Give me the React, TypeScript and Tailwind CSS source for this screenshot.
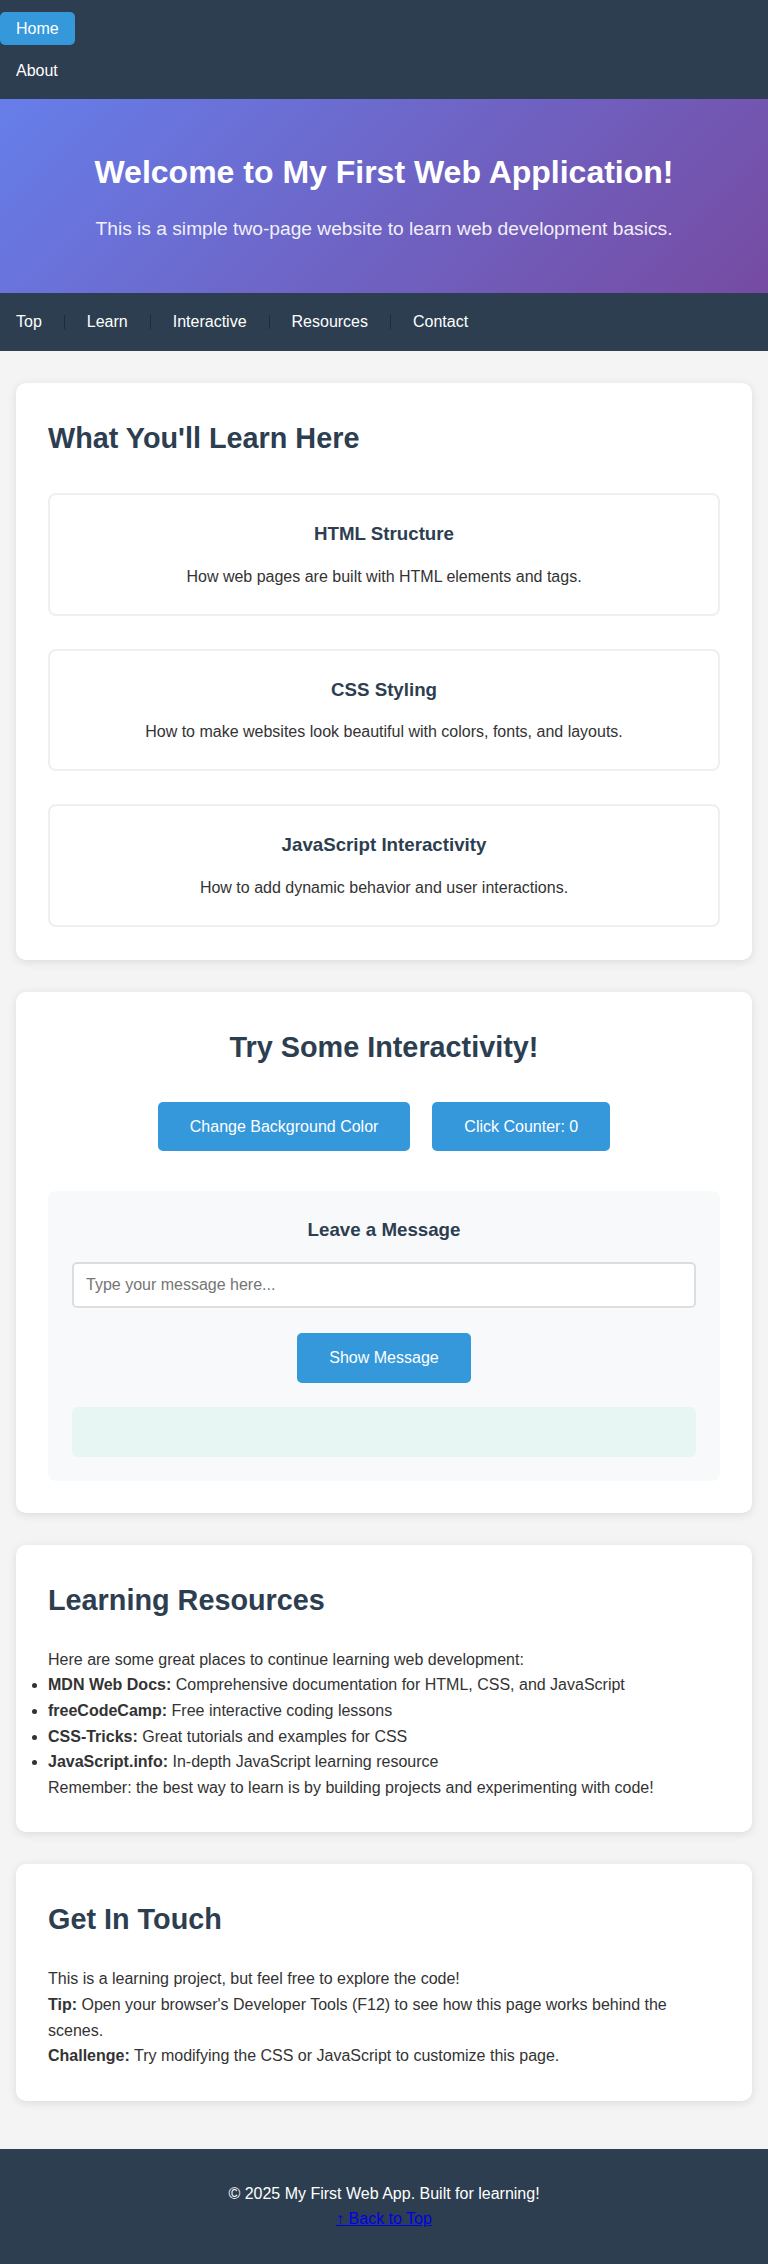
import React, { useState } from 'react';

const sections = ['Top', 'Learn', 'Interactive', 'Resources', 'Contact'];

const features = [
  { title: 'HTML Structure', text: 'How web pages are built with HTML elements and tags.' },
  { title: 'CSS Styling', text: 'How to make websites look beautiful with colors, fonts, and layouts.' },
  { title: 'JavaScript Interactivity', text: 'How to add dynamic behavior and user interactions.' },
];

const resources = [
  { name: 'MDN Web Docs:', text: 'Comprehensive documentation for HTML, CSS, and JavaScript' },
  { name: 'freeCodeCamp:', text: 'Free interactive coding lessons' },
  { name: 'CSS-Tricks:', text: 'Great tutorials and examples for CSS' },
  { name: 'JavaScript.info:', text: 'In-depth JavaScript learning resource' },
];

function Card(props: { children: React.ReactNode; className?: string }) {
  return (
    <section
      className={`rounded-[10px] bg-white px-8 pt-8 shadow-[0_2px_10px_rgba(0,0,0,0.1)] ${props.className ?? ''}`}
    >
      {props.children}
    </section>
  );
}

function Heading(props: { children: React.ReactNode; className?: string }) {
  return (
    <h2 className={`text-[28.8px] font-bold leading-[1.6] text-[#2c3e50] ${props.className ?? ''}`}>
      {props.children}
    </h2>
  );
}

export default function App() {
  const [count, setCount] = useState(0);
  const [message, setMessage] = useState('');
  const [shown, setShown] = useState('');

  return (
    <div className="min-h-screen bg-[#f4f4f4] font-['Liberation_Sans',Arial,sans-serif] text-base leading-[1.6] text-[#333]">
      <nav className="bg-[#2c3e50] py-3">
        <ul className="flex flex-col items-start gap-[9px]">
          <li>
            <a href="#" className="flex h-[33px] items-center rounded-[5px] bg-[#3498db] px-4 text-white">
              Home
            </a>
          </li>
          <li>
            <a href="#" className="flex h-[33px] items-center px-4 text-white">
              About
            </a>
          </li>
        </ul>
      </nav>

      <header className="bg-[linear-gradient(135deg,#667eea_0%,#764ba2_100%)] py-12 text-center text-white">
        <h1 className="mb-4 text-[32px] font-bold leading-[1.6]">Welcome to My First Web Application!</h1>
        <p className="text-[19.2px] leading-[1.6] opacity-90">
          This is a simple two-page website to learn web development basics.
        </p>
      </header>

      <div className="flex h-[58px] items-center bg-[#2c3e50]">
        {sections.map((s, i) => (
          <React.Fragment key={s}>
            {i > 0 && <span className="mx-[6px] h-[14px] w-px bg-[#1f2b37]" />}
            <a href="#" className="px-4 text-white">
              {s}
            </a>
          </React.Fragment>
        ))}
      </div>

      <main className="flex flex-col gap-8 px-4 pt-8 pb-12">
        <Card className="pb-[33px]">
          <Heading className="mb-8">What You'll Learn Here</Heading>
          <div className="flex flex-col gap-[33px]">
            {features.map((f) => (
              <div key={f.title} className="rounded-[8px] border-2 border-[#ecf0f1] p-6 text-center">
                <h3 className="mb-[15px] text-[18.72px] font-bold leading-[1.6] text-[#2c3e50]">{f.title}</h3>
                <p>{f.text}</p>
              </div>
            ))}
          </div>
        </Card>

        <Card className="pb-8 text-center">
          <Heading className="mb-8">Try Some Interactivity!</Heading>
          <div className="flex justify-center gap-[22px]">
            <button className="rounded-[5px] bg-[#3498db] px-8 py-3 leading-[1.6] text-white">
              Change Background Color
            </button>
            <button
              onClick={() => setCount(count + 1)}
              className="rounded-[5px] bg-[#3498db] px-8 py-3 leading-[1.6] text-white"
            >
              Click Counter: {count}
            </button>
          </div>

          <div className="mt-10 rounded-[8px] bg-[#f8f9fa] p-6">
            <h3 className="mb-[17px] text-[18.72px] font-bold leading-[1.6] text-[#2c3e50]">Leave a Message</h3>
            <input
              value={message}
              onChange={(e) => setMessage(e.target.value)}
              placeholder="Type your message here..."
              className="block h-[46px] w-full rounded-[5px] border-2 border-[#ddd] bg-white px-3 text-base text-[#333] placeholder:text-[#757575]"
            />
            <button
              onClick={() => setShown(message)}
              className="mt-[25px] rounded-[5px] bg-[#3498db] px-8 py-3 leading-[1.6] text-white"
            >
              Show Message
            </button>
            <div className="mt-6 flex h-[50px] items-center justify-center rounded-[5px] bg-[#e8f6f3]">{shown}</div>
          </div>
        </Card>

        <Card className="pb-8">
          <Heading className="mb-6">Learning Resources</Heading>
          <p>Here are some great places to continue learning web development:</p>
          <ul className="list-disc">
            {resources.map((r) => (
              <li key={r.name}>
                <strong>{r.name}</strong> {r.text}
              </li>
            ))}
          </ul>
          <p>Remember: the best way to learn is by building projects and experimenting with code!</p>
        </Card>

        <Card className="pb-8">
          <Heading className="mb-6">Get In Touch</Heading>
          <p>This is a learning project, but feel free to explore the code!</p>
          <p>
            <strong>Tip:</strong> Open your browser's Developer Tools (F12) to see how this page works behind the
            scenes.
          </p>
          <p>
            <strong>Challenge:</strong> Try modifying the CSS or JavaScript to customize this page.
          </p>
        </Card>
      </main>

      <footer className="bg-[#2c3e50] py-8 text-center text-white">
        <p>© 2025 My First Web App. Built for learning!</p>
        <p>
          <a href="#" className="text-[#0000ee] underline">
            ↑ Back to Top
          </a>
        </p>
      </footer>
    </div>
  );
}
